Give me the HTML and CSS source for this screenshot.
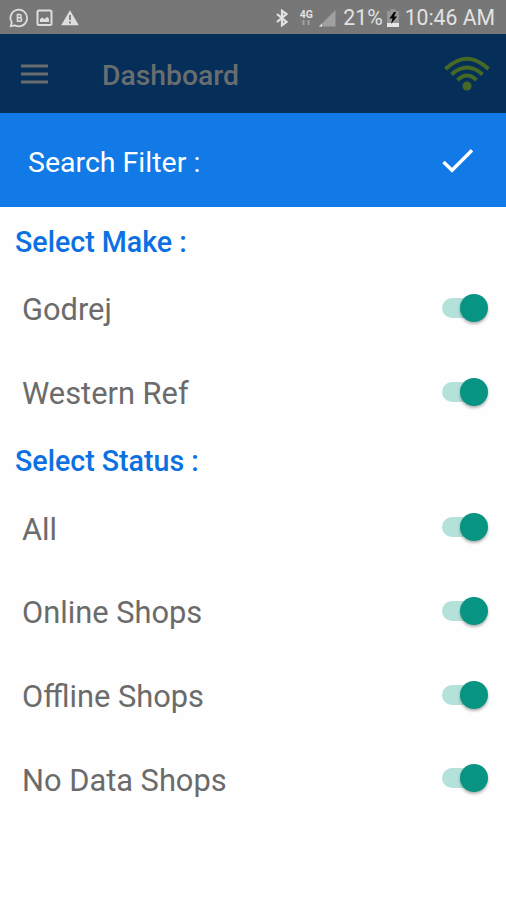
FILE: index.html
```
<!DOCTYPE html>
<html lang="en">
<head>
    <meta charset="UTF-8">
    <meta name="viewport" content="width=device-width, initial-scale=1.0">
    <title>Dashboard</title>

    <link rel="stylesheet" href="styles.css">
</head>
<body>
    <div class="status-bar">
        <svg class="notifications" width="72" height="20" viewBox="0 0 72 20">
            <path d="M2.800 14.500A8.300 8.300 0 1 1 6 17.400L1.800 18.200Z" fill="none" stroke="#dedede" stroke-width="1.8"/>
            <path d="M8.500 6.500h2a1.500 1.500 0 0 1 0 3.200h-2zM8.500 9.700h2.300a1.700 1.700 0 0 1 0 3.500H8.500z" fill="none" stroke="#dedede" stroke-width="1.6"/>
            <rect x="28.500" y="2.500" width="14" height="14.500" rx="1.500" fill="none" stroke="#dedede" stroke-width="2"/>
            <path d="M31 14v-3l2.500-1.500 2 1.700 2.500-2.500 2 2V14z" fill="#dedede"/>
            <path d="M61 2.200L69.800 17.300H52.200z" fill="#dedede"/>
            <path d="M61 7v5M61 13.500v2" stroke="#777" stroke-width="1.8"/>
        </svg>
        <div class="system">
            <svg width="12" height="18" viewBox="0 0 12 18">
                <path d="M1 5l9.500 8L6 16.200V1.800L10.500 5 1 13" fill="none" stroke="#e2e2e2" stroke-width="2.200"/>
            </svg>
            <div class="network">
                <span>4G</span>
                <svg width="10" height="6" viewBox="0 0 10 6">
                    <path d="M2.500 0v5M7.500 0v5" stroke="#a2a2a2" stroke-width="2"/>
                </svg>
            </div>
            <svg class="signal" width="17" height="18" viewBox="0 0 17 18">
                <path d="M16.500 1v16.500H0z" fill="#a0a0a0"/>
                <path d="M3 14.500v3H0z" fill="#e2e2e2"/>
            </svg>
            <span class="battery-level">21%</span>
            <svg class="battery" width="12" height="18" viewBox="0 0 12 18">
                <path d="M3.500 0h5v2H12v16H0V2h3.500z" fill="#969696"/>
                <path d="M0 14h12v4H0z" fill="#e6e6e6"/>
                <path d="M7 3L2.500 9.500H5.500L4 15l6-7.500H7L9 3z" fill="#050505"/>
            </svg>
            <span class="clock">10:46 AM</span>
        </div>
    </div>

    <header class="app-bar">
        <svg class="menu" width="27" height="20" viewBox="0 0 27 20">
            <path d="M0 2h27M0 10h27M0 18h27" stroke="#6a6d70" stroke-width="3"/>
        </svg>
        <h1>Dashboard</h1>
        <svg class="wifi" width="46" height="36" viewBox="0 0 46 36">
            <g fill="none" stroke="#466a25" stroke-width="4">
                <path d="M1.500 13Q23-7.500 44.500 13"/>
                <path d="M7.500 18.500Q23 4.500 38.500 18.500"/>
                <path d="M13.500 24Q23 15 32.500 24"/>
            </g>
            <circle cx="23" cy="30" r="4.500" fill="#466a25"/>
        </svg>
    </header>

    <div class="filter-bar">
        <h2>Search Filter :</h2>
        <svg width="32" height="26" viewBox="0 0 32 26">
            <path d="M1.500 14L10 22.300 30 2.300" fill="none" stroke="#fff" stroke-width="3.400"/>
        </svg>
    </div>

    <main class="filters">
        <h3>Select Make :</h3>
        <div class="row"><span>Godrej</span><i class="switch"></i></div>
        <div class="row"><span>Western Ref</span><i class="switch"></i></div>
        <h3>Select Status :</h3>
        <div class="row"><span>All</span><i class="switch"></i></div>
        <div class="row"><span>Online Shops</span><i class="switch"></i></div>
        <div class="row"><span>Offline Shops</span><i class="switch"></i></div>
        <div class="row"><span>No Data Shops</span><i class="switch"></i></div>
    </main>
</body>
</html>
```
FILE: styles.css
```
* {
    box-sizing: border-box;
}

body {
    margin: 0;
    height: 900px;
    overflow: hidden;
    background: #fefefe;
    font-family: Roboto, sans-serif;
}

h1, h2, h3 {
    margin: 0;
}

svg {
    display: block;
    flex: none;
}

.status-bar {
    display: flex;
    align-items: center;
    justify-content: space-between;
    height: 34px;
    padding: 1px 11px 0 9px;
    background: #777;
    color: #e2e2e2;
    font-size: 21.2px;
}

.system {
    display: flex;
    align-items: center;
    white-space: nowrap;
}

.network {
    display: flex;
    flex-direction: column;
    align-items: center;
    width: 16px;
    margin: 0 5px 0 10px;
    font-size: 10.5px;
    font-weight: 700;
    line-height: 11px;
}

.signal {
    margin-right: 7px;
}

.battery {
    margin: 0 6px 0 4px;
}

.app-bar {
    display: flex;
    align-items: center;
    height: 79px;
    padding: 0 16px 0 21px;
    background: #052f59;
}

.menu {
    margin-right: 54px;
}

.app-bar h1 {
    flex: 1;
    padding-top: 4px;
    color: #6a6d70;
    font-size: 28.3px;
    font-weight: 500;
}

.filter-bar {
    display: flex;
    align-items: center;
    justify-content: space-between;
    height: 94px;
    padding: 2px 32px 0 28px;
    background: #117ae6;
    color: #fff;
}

.filter-bar h2 {
    padding-top: 2px;
    font-size: 28.5px;
    font-weight: 400;
}

.filters {
    padding-top: 7px;
}

.filters h3 {
    height: 52px;
    padding-left: 15px;
    color: #0b70e1;
    font-size: 28.6px;
    font-weight: 500;
    line-height: 56px;
}

.row {
    display: flex;
    align-items: center;
    justify-content: space-between;
    height: 83.7px;
    padding: 0 18px 0 22px;
    color: #6b6b6b;
    font-size: 30.8px;
}

.row span {
    padding-top: 4px;
}

.switch {
    position: relative;
    width: 46px;
    height: 28px;
}

.switch::before {
    content: "";
    position: absolute;
    top: 4px;
    left: 0;
    width: 40px;
    height: 20px;
    border-radius: 10px;
    background: #b4e2da;
}

.switch::after {
    content: "";
    position: absolute;
    top: 0;
    right: 0;
    width: 28px;
    height: 28px;
    border-radius: 50%;
    background: #079482;
    box-shadow: 0 2px 3px rgba(0, 0, 0, 0.3);
}
```
